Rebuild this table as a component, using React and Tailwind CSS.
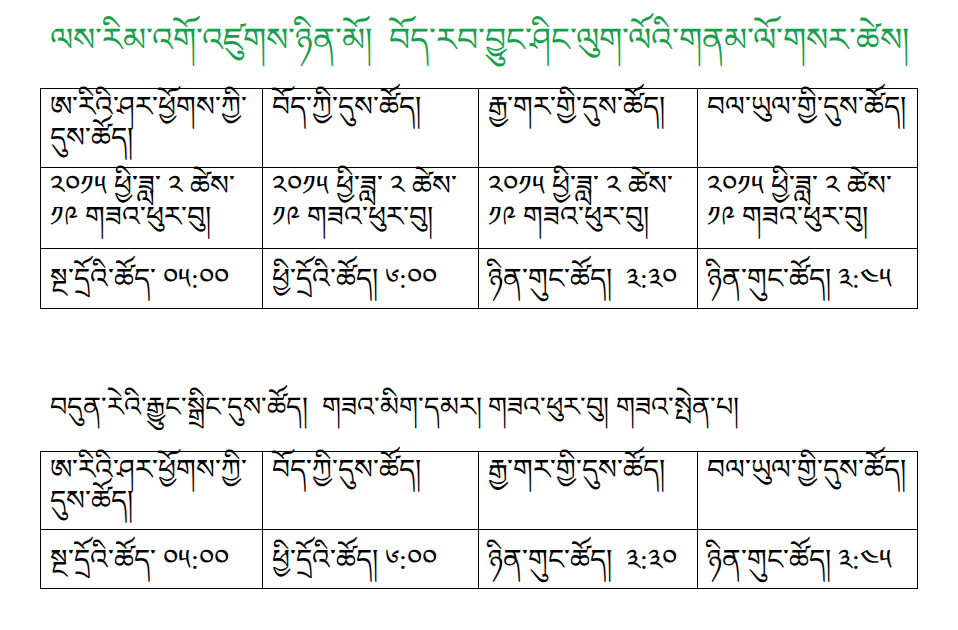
const heads = [
  "ཨ་རིའི་ཤར་ཕྱོགས་ཀྱི་དུས་ཚོད།",
  "བོད་ཀྱི་དུས་ཚོད།",
  "རྒྱ་གར་གྱི་དུས་ཚོད།",
  "བལ་ཡུལ་གྱི་དུས་ཚོད།",
];

const date = "༢༠༡༥ ཕྱི་ཟླ་ ༢ ཚེས་ ༡༩ གཟའ་ཕུར་བུ།";

const times = [
  "སྔ་དྲོའི་ཚོད་ ༠༥:༠༠",
  "ཕྱི་དྲོའི་ཚོད། ༦:༠༠",
  "ཉིན་གུང་ཚོད།  ༣:༣༠",
  "ཉིན་གུང་ཚོད། ༣:༤༥",
];

function Row({ cells, height, center }) {
  return (
    <div className={`grid grid-cols-[222px_216px_219px_220px] ${height}`}>
      {cells.map((c, i) => (
        <div
          key={i}
          className={`border-r border-b border-black px-[9px] leading-[31px] whitespace-pre-wrap ${
            center ? "flex items-center" : "pt-[2px]"
          }`}
        >
          {c}
        </div>
      ))}
    </div>
  );
}

function Table({ children }) {
  return <div className="w-fit border-l border-t border-black">{children}</div>;
}

export default function App() {
  return (
    <div className="w-[958px] h-[630px] bg-white text-black pl-[40px] font-['Noto_Sans_Tibetan',serif] text-[28px]">
      <h1 className="pl-[10px] pt-[16px] h-[88px] text-[33px] leading-[48px] font-normal whitespace-pre text-[#17a04b]">
        {"ལས་རིམ་འགོ་འཛུགས་ཉིན་མོ།  བོད་རབ་བྱུང་ཤིང་ལུག་ལོའི་གནམ་ལོ་གསར་ཚེས།"}
      </h1>

      <Table>
        <Row cells={heads} height="h-[79px]" />
        <Row cells={[date, date, date, date]} height="h-[81px]" />
        <Row cells={times} height="h-[60px]" center />
      </Table>

      <p className="pl-[10px] pt-[78px] h-[142px] text-[27px] leading-[40px] whitespace-pre">
        {"བདུན་རེའི་རྒྱུང་སྒྲིང་དུས་ཚོད།  གཟའ་མིག་དམར། གཟའ་ཕུར་བུ། གཟའ་སྤེན་པ།"}
      </p>

      <Table>
        <Row cells={heads} height="h-[78px]" />
        <Row cells={times} height="h-[59px]" center />
      </Table>
    </div>
  );
}
